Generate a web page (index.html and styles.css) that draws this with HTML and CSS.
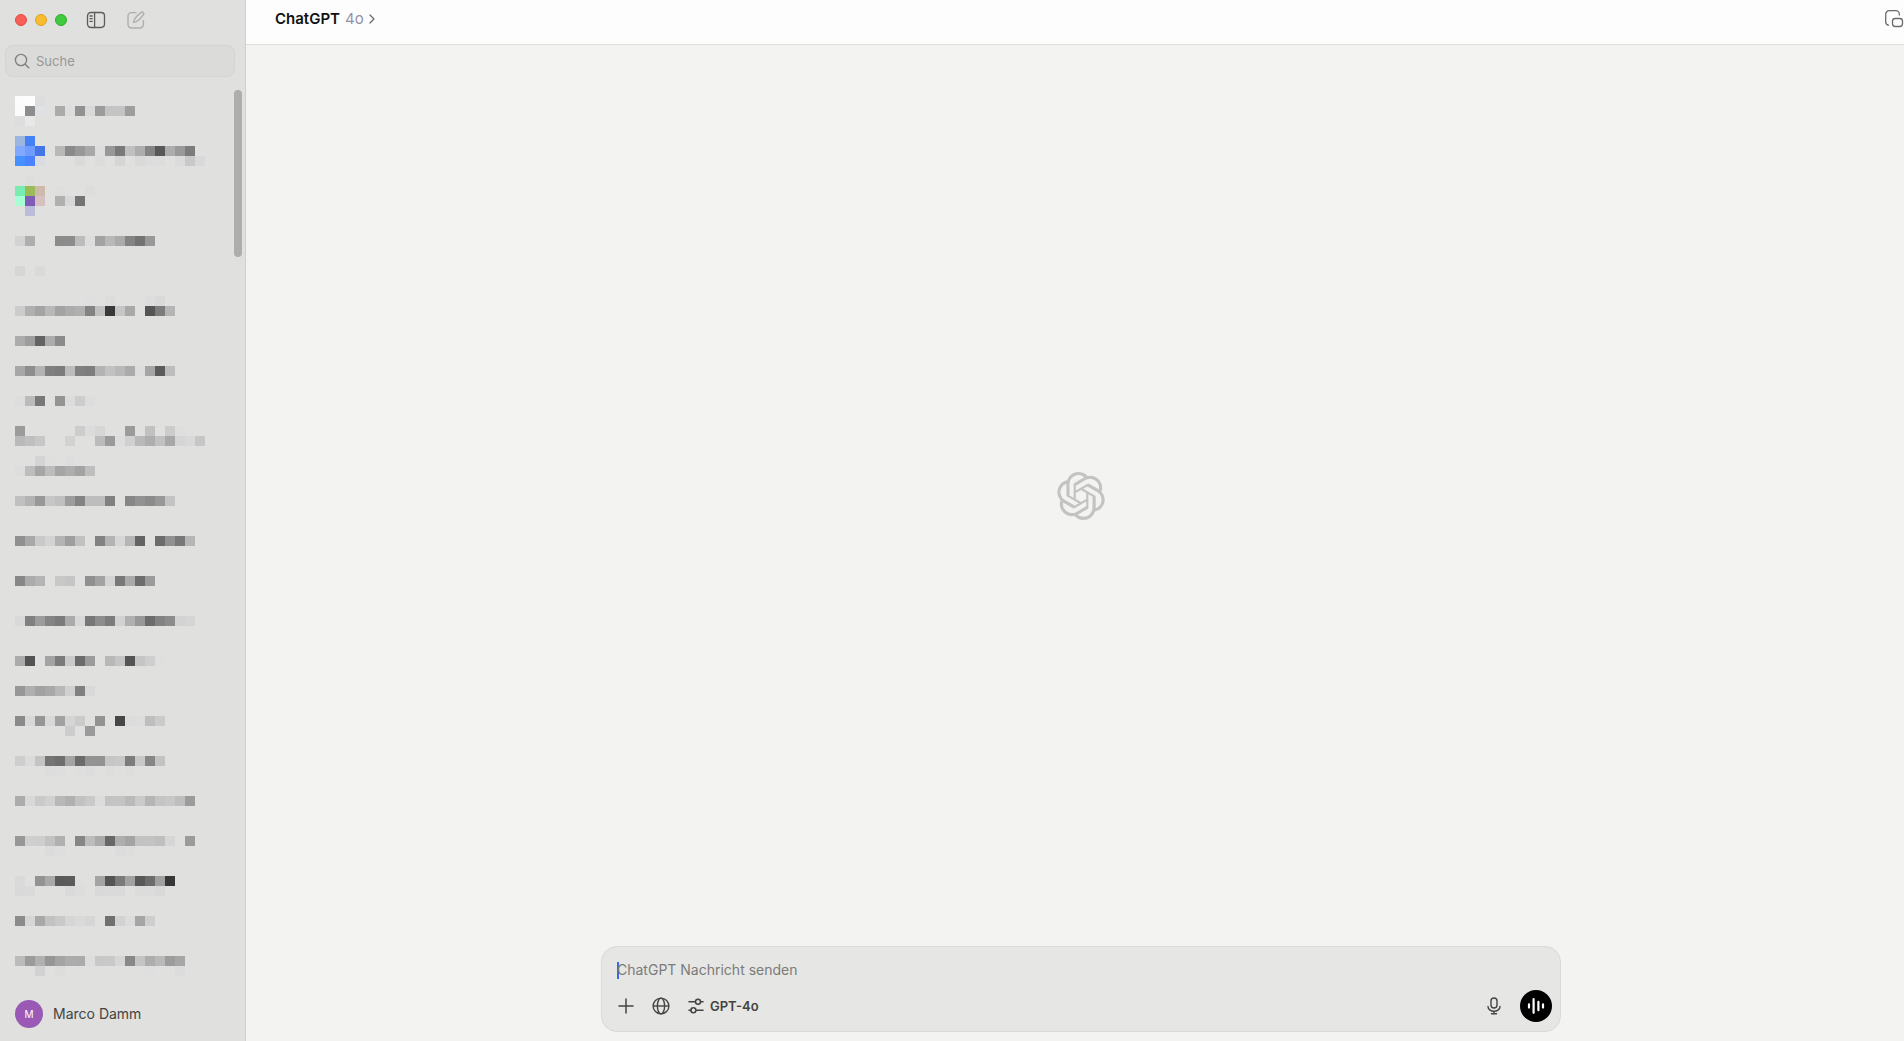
FILE: index.html
```html
<!DOCTYPE html>
<html lang="de">
<head>
<meta charset="utf-8">
<meta name="viewport" content="width=device-width, initial-scale=1">
<title>ChatGPT</title>
<link rel="stylesheet" href="styles.css">
</head>
<body>
<div class="app">
  <aside class="sidebar">
    <div class="toolbar">
      <div class="lights">
        <button class="light light-close" type="button" aria-label="Schließen"></button>
        <button class="light light-min" type="button" aria-label="Minimieren"></button>
        <button class="light light-max" type="button" aria-label="Maximieren"></button>
      </div>
      <button class="icon-btn toggle" type="button" aria-label="Seitenleiste">
        <svg width="20" height="20" viewBox="0 0 20 20" fill="none" stroke="currentColor" stroke-width="1.3" stroke-linecap="round"><rect x="1.5" y="2.5" width="17" height="15" rx="3.4"/><path d="M8.6 2.5v15M4 6h2.200M4 8.700h2.200M4 11.400h2.200"/></svg>
      </button>
      <button class="icon-btn compose" type="button" aria-label="Neuer Chat">
        <svg width="20" height="20" viewBox="0 0 20 20" fill="none" stroke="currentColor" stroke-width="1.4" stroke-linecap="round" stroke-linejoin="round"><path d="M10 2.600H5.500a3.500 3.500 0 0 0-3.500 3.500v8.400A3.500 3.500 0 0 0 5.500 18h8.400a3.500 3.500 0 0 0 3.500-3.500V10.500"/><path d="M15 2.600a1.600 1.600 0 0 1 2.300 2.300c-1.500 2.200-3.700 4.800-6 6.200-1.100.7-2.700 1.100-3.700 1.200.1-1.100.6-2.700 1.300-3.700C10.300 6.300 12.800 4.100 15 2.600z"/></svg>
      </button>
    </div>
    <label class="search">
      <svg width="16" height="16" viewBox="0 0 16 16" fill="none" stroke="currentColor" stroke-width="1.4" stroke-linecap="round"><circle cx="7" cy="7" r="5.600"/><path d="M11.200 11.200l3.600 3.600"/></svg>
      <input type="search" placeholder="Suche" aria-label="Suche">
    </label>
    <nav class="history" aria-label="Verlauf">
      <ul class="chats" id="chats"></ul>
      <div class="thumb"></div>
    </nav>
    <button class="account" type="button">
      <span class="avatar">M</span>
      <span>Marco Damm</span>
    </button>
  </aside>

  <main class="main">
    <header class="topbar">
      <button class="model" type="button">
        <span class="model-name">ChatGPT</span>
        <span class="model-version">4o</span>
        <svg width="6" height="10" viewBox="0 0 6 10" fill="none" stroke="currentColor" stroke-width="1.3" stroke-linecap="round" stroke-linejoin="round"><path d="M1 1l4 4-4 4"/></svg>
      </button>
      <button class="icon-btn" type="button" aria-label="Begleitfenster">
        <svg width="20" height="20" viewBox="0 0 20 20" fill="none" stroke="currentColor" stroke-width="1.300" stroke-linecap="round"><path d="M4.500 16.200A3.300 3.300 0 0 1 1.700 13V5.200a3.500 3.500 0 0 1 3.500-3.500h6.600a3.500 3.500 0 0 1 3.500 3.500v.8"/><rect x="8.500" y="9.500" width="10" height="8" rx="2.800"/></svg>
      </button>
    </header>

    <section class="stage">
      <svg class="logo" width="48" height="48" viewBox="0 0 24 24" fill="currentColor" role="img" aria-label="OpenAI"><path d="M22.2819 9.8211a5.9847 5.9847 0 0 0-.5157-4.9108 6.0462 6.0462 0 0 0-6.5098-2.9A6.0651 6.0651 0 0 0 4.9807 4.1818a5.9847 5.9847 0 0 0-3.9977 2.9 6.0462 6.0462 0 0 0 .7427 7.0966 5.98 5.98 0 0 0 .511 4.9107 6.051 6.051 0 0 0 6.5146 2.9001A5.9847 5.9847 0 0 0 13.2599 24a6.0557 6.0557 0 0 0 5.7718-4.2058 5.9894 5.9894 0 0 0 3.9977-2.9001 6.0557 6.0557 0 0 0-.7475-7.0729zm-9.022 12.6081a4.4755 4.4755 0 0 1-2.8764-1.0408l.1419-.0804 4.7783-2.7582a.7948.7948 0 0 0 .3927-.6813v-6.7369l2.02 1.1686a.071.071 0 0 1 .038.052v5.5826a4.504 4.504 0 0 1-4.4945 4.4944zm-9.6607-4.1254a4.4708 4.4708 0 0 1-.5346-3.0137l.142.0852 4.783 2.7582a.7712.7712 0 0 0 .7806 0l5.8428-3.3685v2.3324a.0804.0804 0 0 1-.0332.0615L9.74 19.9502a4.4992 4.4992 0 0 1-6.1408-1.6464zM2.3408 7.8956a4.485 4.485 0 0 1 2.3655-1.9728V11.6a.7664.7664 0 0 0 .3879.6765l5.8144 3.3543-2.0201 1.1685a.0757.0757 0 0 1-.071 0l-4.8303-2.7865A4.504 4.504 0 0 1 2.3408 7.872zm16.5963 3.8558L13.1038 8.364 15.1192 7.2a.0757.0757 0 0 1 .071 0l4.8303 2.7913a4.4944 4.4944 0 0 1-.6765 8.1042v-5.6772a.79.79 0 0 0-.407-.667zm2.0107-3.0231l-.142-.0852-4.7735-2.7818a.7759.7759 0 0 0-.7854 0L9.409 9.2297V6.8974a.0662.0662 0 0 1 .0284-.0615l4.8303-2.7866a4.4992 4.4992 0 0 1 6.6802 4.66zM8.3065 12.863l-2.02-1.1638a.0804.0804 0 0 1-.038-.0567V6.0742a4.4992 4.4992 0 0 1 7.3757-3.4537l-.142.0805L8.704 5.459a.7948.7948 0 0 0-.3927.6813zm1.0976-2.3654l2.602-1.4998 2.6069 1.4998v2.9994l-2.5974 1.4997-2.6067-1.4997Z"/></svg>
    </section>

    <form class="composer">
      <div class="prompt">
        <span class="caret"></span>
        <input type="text" placeholder="ChatGPT Nachricht senden" aria-label="ChatGPT Nachricht senden">
      </div>
      <div class="actions">
        <button class="icon-btn" type="button" aria-label="Anhängen">
          <svg width="18" height="18" viewBox="0 0 18 18" fill="none" stroke="currentColor" stroke-width="1.500" stroke-linecap="round"><path d="M9 2v14M2 9h14"/></svg>
        </button>
        <button class="icon-btn" type="button" aria-label="Websuche">
          <svg width="18" height="18" viewBox="0 0 18 18" fill="none" stroke="currentColor" stroke-width="1.400"><circle cx="9" cy="9" r="7.900"/><ellipse cx="9" cy="9" rx="3.600" ry="7.900"/><path d="M1.100 9h15.800"/></svg>
        </button>
        <button class="icon-btn picker" type="button">
          <svg width="18" height="18" viewBox="0 0 18 18" fill="none" stroke="currentColor" stroke-width="1.500" stroke-linecap="round"><path d="M2 4.700h6.400M13.600 4.700H16M2 13.300h1.800M9 13.300h7"/><circle cx="11" cy="4.700" r="2.500"/><circle cx="6.400" cy="13.300" r="2.500"/></svg>
          <span>GPT-4o</span>
        </button>
        <button class="icon-btn mic" type="button" aria-label="Diktieren">
          <svg width="18" height="18" viewBox="0 0 18 18" fill="none" stroke="currentColor" stroke-width="1.400" stroke-linecap="round"><rect x="6" y="1" width="6" height="10" rx="3"/><path d="M3 9.500a6 4.800 0 0 0 12 0M9 14.300v2.500M6.500 16.800h5"/></svg>
        </button>
        <button class="voice" type="button" aria-label="Sprachmodus">
          <svg width="32" height="32" viewBox="0 0 32 32" fill="none" stroke="currentColor" stroke-width="2.200" stroke-linecap="round"><path d="M9 14.400v3.200M13.600 9.200v13.600M18.400 11.800v8.400M23 14.400v3.200"/></svg>
        </button>
      </div>
    </form>
  </main>
</div>
<script src="chats.js"></script>
</body>
</html>
```
FILE: styles.css
```css
* {
  box-sizing: border-box;
}

body {
  margin: 0;
  font-family: Inter, "Liberation Sans", sans-serif;
  font-size: 14px;
  line-height: 20px;
  color: #444442;
}

button,
input {
  margin: 0;
  padding: 0;
  border: 0;
  background: none;
  font: inherit;
  color: inherit;
  outline: none;
}

svg {
  display: block;
  flex: none;
}

.app {
  display: flex;
  height: 100vh;
  background: #f3f3f1;
  overflow: hidden;
}

/* Sidebar */
.sidebar {
  display: flex;
  flex-direction: column;
  flex: none;
  width: 246px;
  background: #e0e0de;
  border-right: 1px solid #cfcfcd;
}

.toolbar {
  display: flex;
  align-items: center;
  height: 38px;
  padding: 2px 15px 0;
}

.lights {
  display: flex;
  gap: 8px;
  margin-right: 19px;
}

.light {
  width: 12px;
  height: 12px;
  border: 1px solid;
  border-radius: 50%;
}

.light-close {
  background: #f65f57;
  border-color: #e14942;
}

.light-min {
  background: #f7bd2e;
  border-color: #dfa023;
}

.light-max {
  background: #41c93f;
  border-color: #2dac2f;
}

.icon-btn {
  display: flex;
  align-items: center;
}

.toggle {
  color: #5c5c5a;
}

.compose {
  margin-left: 20px;
  color: #aeaeac;
}

.search {
  display: flex;
  align-items: center;
  gap: 6px;
  height: 32px;
  margin: 7px 10px 0 5px;
  padding: 0 8px;
  border: 1px solid #d4d4d2;
  border-radius: 8px;
  background: #dbdbd9;
  color: #80807e;
}

.search input {
  flex: 1;
  min-width: 0;
  font-size: 13px;
}

.search input::placeholder {
  color: #989896;
  opacity: 1;
}

.history {
  position: relative;
  flex: 1;
  min-height: 0;
  margin-top: 9px;
  padding: 10px 15px 0;
  overflow: hidden;
}

.chats {
  margin: 0;
  padding: 0;
  list-style: none;
}

.thumb {
  position: absolute;
  top: 4px;
  right: 3px;
  width: 8px;
  height: 167px;
  border-radius: 4px;
  background: #aeaeac;
}

.account {
  display: flex;
  align-items: center;
  gap: 10px;
  padding: 13px 15px;
}

.avatar {
  width: 28px;
  height: 28px;
  border-radius: 50%;
  background: #9b59b6;
  color: #fff;
  font-size: 10px;
  line-height: 28px;
  text-align: center;
}

/* Conversation */
.main {
  display: flex;
  flex-direction: column;
  flex: 1;
  min-width: 0;
}

.topbar {
  display: flex;
  align-items: center;
  justify-content: space-between;
  height: 45px;
  padding: 0 0 6px 29px;
  border-bottom: 1px solid #dededc;
  background: #fdfdfd;
  color: #6c6c6a;
}

.model {
  display: flex;
  align-items: center;
  gap: 5px;
  font-size: 15px;
}

.model-name {
  font-weight: 600;
  color: #111;
}

.model-version {
  color: #9490a8;
}

.stage {
  display: flex;
  flex: 1;
  align-items: center;
  justify-content: center;
  padding-left: 12px;
  color: #c3c3c1;
}

.composer {
  display: flex;
  flex-direction: column;
  gap: 10px;
  align-self: center;
  width: calc(100% - 24px);
  max-width: 960px;
  margin: 0 0 9px 12px;
  padding: 13px 8px 9px 15px;
  border: 1px solid #d9d9d7;
  border-radius: 16px;
  background: #e6e6e4;
}

.prompt {
  display: flex;
  align-items: center;
}

.caret {
  width: 2px;
  height: 17px;
  margin-right: -2px;
  background: #3f68f0;
}

.prompt input {
  flex: 1;
  min-width: 0;
  height: 20px;
}

.prompt input::placeholder {
  color: #7b7b79;
  opacity: 1;
}

.actions {
  display: flex;
  align-items: center;
  gap: 17px;
}

.picker {
  gap: 5px;
  font-size: 13px;
  font-weight: 600;
}

.mic {
  margin-left: auto;
}

.voice {
  border-radius: 50%;
  background: #000;
  color: #fff;
}
```
FILE: chats.js
```js
// Redacted chat titles, one entry per chat, one string per line of 10px cells.
// A cell is a grey level (two hex digits), a colour (six) or "." for none.
const CELL = 10;
const COLUMNS = 19;

const chats = [
  ["fc fd dd",
   "fb 8b8d8f e0e1e3 . ab dd 92 d9 9c c4 c4 9e",
   "dd e8",
   ""],
  ["9cb6e0 4581f5",
   "80a9ff 709bff 4576e8 . b8 8a 98 a8 dd 98 79 c0 ad 84 58 ad 99 7c",
   "4790ff 4a82ff dadce2 . . . da . dc . d6 . d9 dd dd . db c9 d9",
   "",
   ". de"],
  ["7aebb1 9abb56 cebaaa . de . . dd",
   "a6ffd2 815bb8 d6c0c0 . b0 d8 74",
   ". bdbcd8",
   "",
   ""],
  ["d3 ae . . 8b 8c bc dd a2 b8 ab 84 73 98", "", ""],
  ["d6 . da", "", ""],
  [". . . . . . . df . dc . . . dd d9",
   "cc b0 a4 b8 a3 ac b0 83 c0 39 c6 a9 . 55 7c b5", "", ""],
  ["ac 9d 63 ac 8b", "", ""],
  ["a7 8e b3 80 7c bc 80 7d b3 c2 b9 ab dd a5 5b bc", "", ""],
  ["dd bb 78 . 94 dc cd dd", "", ""],
  ["9b . . . . . cd dc d6 . . 9b . c1 . cc de",
   "b9 bf c7 . . d2 . . bb 9a dd d0 b9 ae c1 a8 d5 d9 c6", ""],
  [". . d4 df . de",
   "dd bd a6 bc a5 ad a3 be", "", ""],
  ["c0 b3 98 c6 c0 9d 83 bd bd 80 . 86 92 8b 98 c3", "", "", ""],
  ["90 a8 c9 d3 b4 9e c1 . 82 b3 d6 b5 63 . 6c 91 78 b6", "", "", ""],
  ["87 ab b4 . c8 c5 . 90 a2 d3 78 aa 6d 9b", "", "", ""],
  ["d9 80 9c 84 7b ab d8 77 8d 7c d2 b0 98 6c 83 8c d3 d5", "", "", ""],
  ["ab 53 df a3 7b ca 6b 9b . b8 c4 54 c5 ce df", "", ""],
  ["97 af a2 a8 b8 d0 80 d9", "", ""],
  ["8a d8 96 d8 a1 d5 cb . 93 . 47 dc dd be cb",
   ". . . . . cc . 9a", "", ""],
  ["ce db c4 74 6e a4 6b 93 92 c6 c8 7c c8 86 c3",
   ". . . dd de . df dd . de . de", "", ""],
  ["ac d8 ca d1 b8 b0 c2 c9 dc c3 c4 ba ca b5 c4 c8 be 9c", "", "", ""],
  ["97 cf ce c2 b0 . 86 bc aa 68 ae a4 c2 c3 bf d6 . 9b",
   ". . . dc de . . . . . dc de", "", ""],
  ["da . 93 a9 5a 5c df . a4 54 7a a2 58 6c a0 37",
   "d9 da . . . da dd . d9 da da . dc dc d9", "", ""],
  ["8b d6 a8 c2 c9 d6 da d6 . 70 d2 dc a5 ce", "", "", ""],
  ["bb 9b b1 96 a4 ac ab dd c8 c9 d6 88 c4 ad b9 9c a6",
   ". . d2 . dd . . . . . . . . df . . dc"]
];

const toColour = (cell) => "#" + (cell.length === 2 ? cell.repeat(3) : cell);

const drawChat = (lines) => {
  const rects = lines.flatMap((line, row) =>
    line.split(" ").map((cell, col) =>
      cell && cell !== "."
        ? `<rect x="${col * CELL}" y="${row * CELL}" width="${CELL}" height="${CELL}" fill="${toColour(cell)}"/>`
        : ""));
  return `<li><svg width="${COLUMNS * CELL}" height="${lines.length * CELL}" aria-hidden="true">${rects.join("")}</svg></li>`;
};

document.getElementById("chats").innerHTML = chats.map(drawChat).join("");
```
